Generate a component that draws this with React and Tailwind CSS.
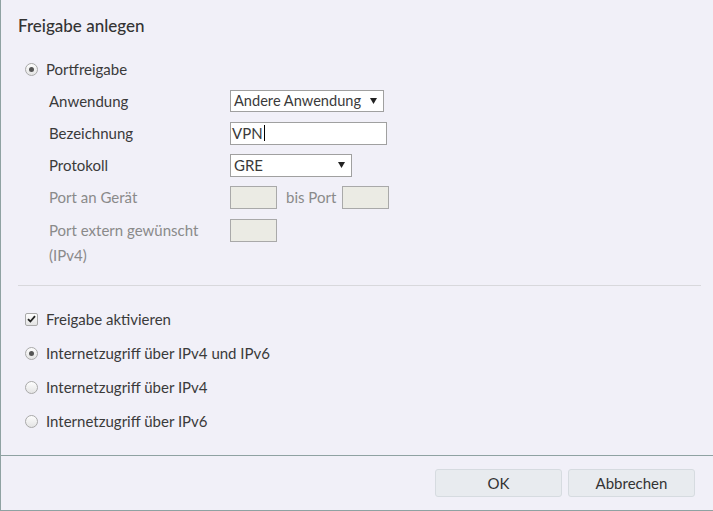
import React from "react";

function Radio({ checked }) {
  return (
    <span className="w-[13px] h-[13px] rounded-full border border-[#a9a9a9] bg-[linear-gradient(#fdfdfd,#e4e4e4)] flex items-center justify-center shrink-0">
      {checked && <span className="w-[5px] h-[5px] rounded-full bg-[#555]" />}
    </span>
  );
}

function Check() {
  return (
    <span className="w-[13px] h-[13px] rounded-[2px] border border-[#a9a9a9] bg-[linear-gradient(#fdfdfd,#e4e4e4)] flex items-center justify-center shrink-0">
      <svg width="9" height="8" viewBox="0 0 9 8">
        <path d="M1 4.2 L3.4 6.5 L8 1.2" stroke="#222" strokeWidth="1.8" fill="none" />
      </svg>
    </span>
  );
}

function Arrow() {
  return (
    <svg width="7" height="6" viewBox="0 0 7 6" className="shrink-0">
      <path d="M0 0 H7 L3.5 6 Z" fill="#222" />
    </svg>
  );
}

const font = { fontFamily: "Lato, 'Open Sans', sans-serif" };

export default function App() {
  return (
    <div
      className="w-[713px] h-[511px] bg-[#f1f0f8] border-l border-b border-[#8fa2a2] flex flex-col text-[15px] text-[#3a3a3a]"
      style={font}
    >
      <div className="px-[17px] pt-[14px] text-[17px] leading-[24px] text-[#333] font-medium">
        Freigabe anlegen
      </div>
      <div className="flex-1 flex flex-col px-[24px]">
        <div className="flex items-center gap-[8px] mt-[20px] h-[22px]">
          <Radio checked />
          <span>Portfreigabe</span>
        </div>
        <div className="flex flex-col pl-[24px] mt-[10px] gap-[10px]">
          <div className="flex items-center h-[22px]">
            <span className="w-[181px]">Anwendung</span>
            <div className="w-[154px] h-[22px] bg-white border border-[#a0a0a0] flex items-center pl-[3px] pr-[6px] gap-[3px] whitespace-nowrap overflow-hidden">
              <span className="flex-1 text-[14.6px]">Andere Anwendung</span>
              <Arrow />
            </div>
          </div>
          <div className="flex items-center h-[22px]">
            <span className="w-[181px]">Bezeichnung</span>
            <div className="w-[157px] h-[23px] bg-white border border-[#a0a0a0] flex items-center pl-[1px]">
              <span>VPN</span>
              <span className="w-px h-[16px] bg-black ml-[1px]" />
            </div>
          </div>
          <div className="flex items-center h-[22px]">
            <span className="w-[181px]">Protokoll</span>
            <div className="w-[122px] h-[23px] bg-white border border-[#a0a0a0] flex items-center pl-[3px] pr-[6px]">
              <span className="flex-1">GRE</span>
              <Arrow />
            </div>
          </div>
          <div className="flex items-center h-[22px] text-[#8a8a8a]">
            <span className="w-[181px]">Port an Gerät</span>
            <div className="w-[47px] h-[23px] bg-[#ebebe4] border border-[#a9a9a9]" />
            <span className="ml-[9px] mr-[6px]">bis Port</span>
            <div className="w-[47px] h-[23px] bg-[#ebebe4] border border-[#a9a9a9]" />
          </div>
          <div className="flex items-start text-[#8a8a8a]">
            <span className="w-[181px] leading-[25px]">
              Port extern gewünscht
              <br />
              (IPv4)
            </span>
            <div className="w-[47px] h-[23px] bg-[#ebebe4] border border-[#a9a9a9] mt-px" />
          </div>
        </div>
        <div className="h-px bg-[#d8d8dc] mt-[17px] ml-[-7px] mr-[-12px]" />
        <div className="flex flex-col gap-[12px] mt-[22px]">
          <div className="flex items-center gap-[8px] h-[22px]">
            <Check />
            <span>Freigabe aktivieren</span>
          </div>
          <div className="flex items-center gap-[8px] h-[22px]">
            <Radio checked />
            <span>Internetzugriff über IPv4 und IPv6</span>
          </div>
          <div className="flex items-center gap-[8px] h-[22px]">
            <Radio />
            <span>Internetzugriff über IPv4</span>
          </div>
          <div className="flex items-center gap-[8px] h-[22px]">
            <Radio />
            <span>Internetzugriff über IPv6</span>
          </div>
        </div>
      </div>
      <div className="h-px bg-[#8fa2a2]" />
      <div className="h-[54px] flex items-start justify-end gap-[6px] pr-[18px] pt-[13px]">
        <button className="w-[127px] h-[28px] rounded-[3px] bg-[#e8ebef] border border-[#d6dbe0] text-[#333]">
          OK
        </button>
        <button className="w-[127px] h-[28px] rounded-[3px] bg-[#e8ebef] border border-[#d6dbe0] text-[#333]">
          Abbrechen
        </button>
      </div>
    </div>
  );
}
